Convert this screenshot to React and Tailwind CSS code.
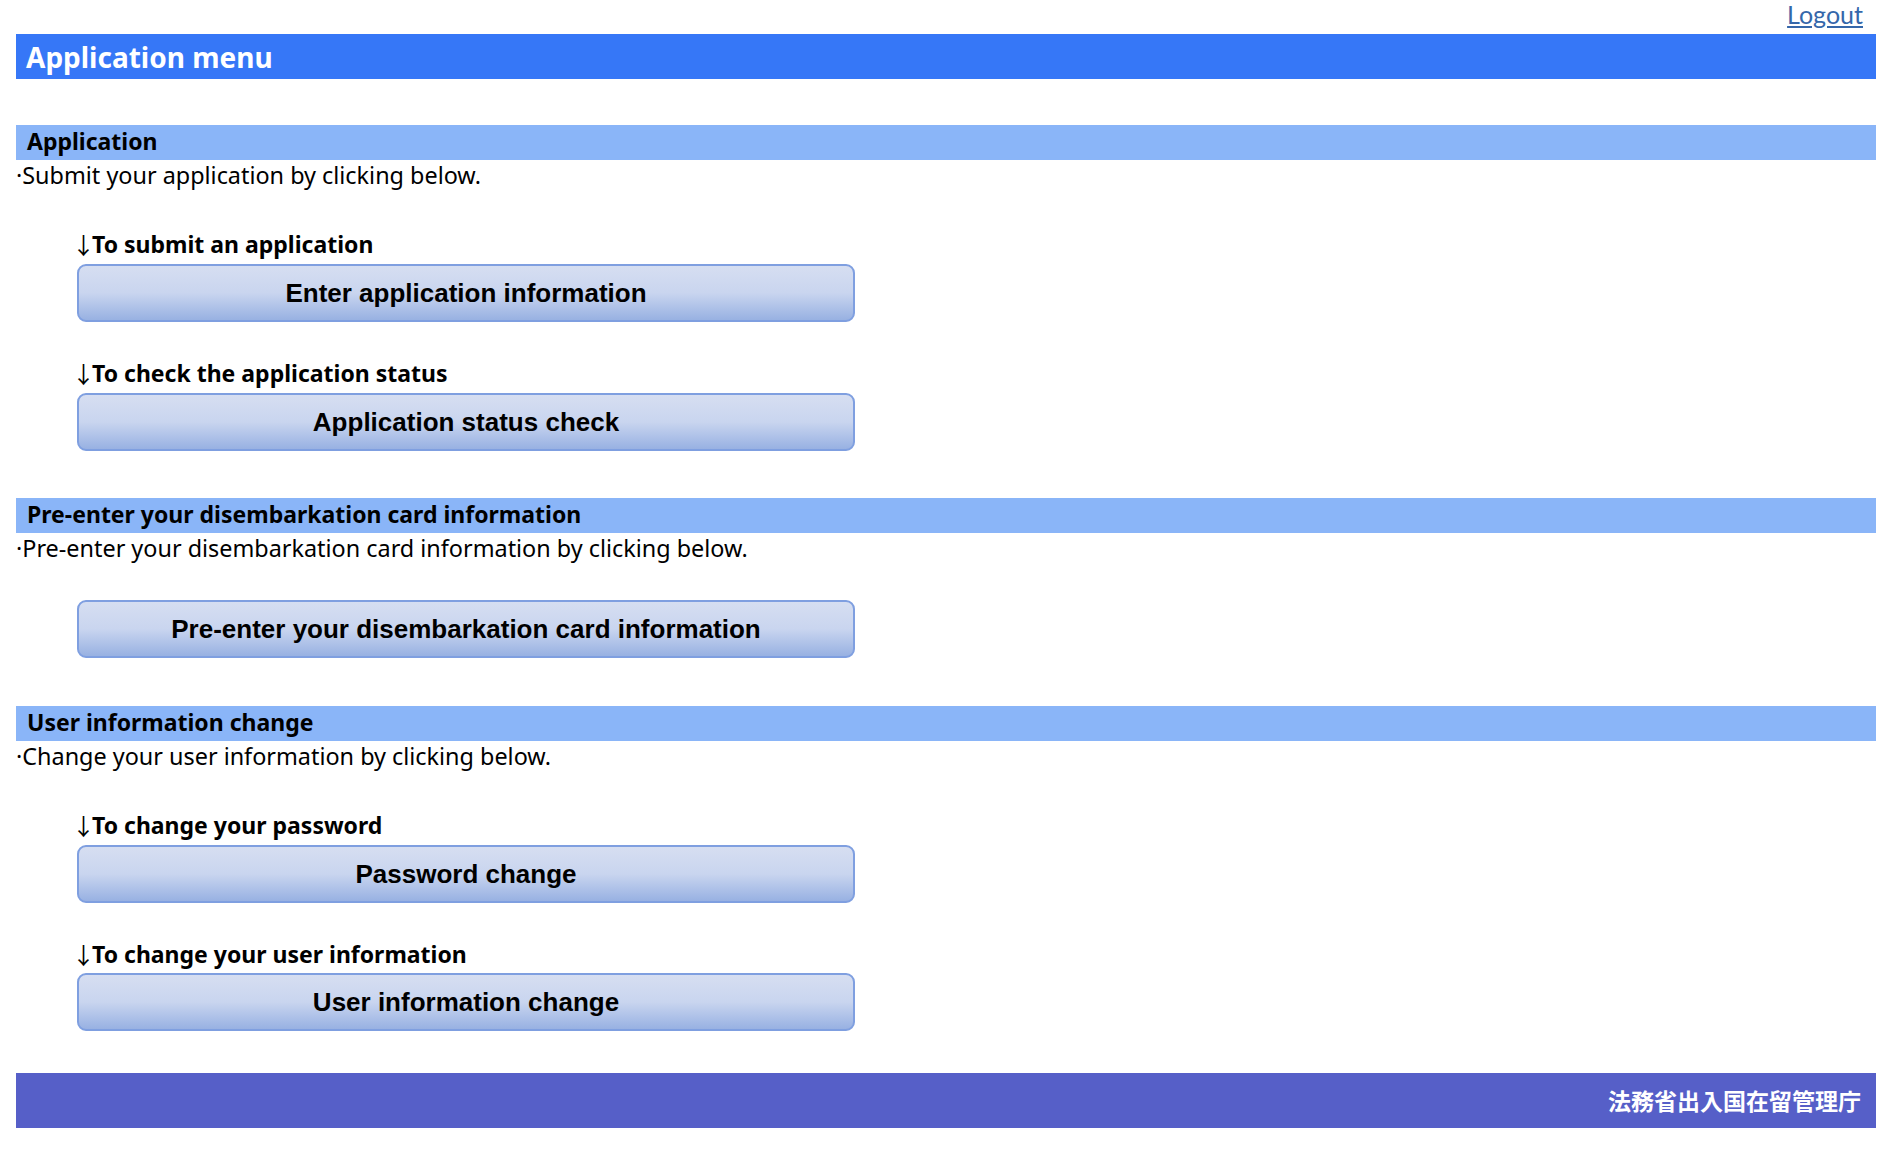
import React from "react";

const KR = { fontFamily: '"Noto Sans", "Noto Sans CJK KR", sans-serif' };

function Label({ children }) {
  return (
    <div className="h-[26px] flex items-end text-[23px] leading-[26px] font-bold text-black whitespace-nowrap" style={KR}>
      <span
        className="font-normal text-[23px] leading-[26px] ml-[-5px] mr-[-3px]"
        style={{ fontFamily: '"Noto Sans CJK KR", sans-serif' }}
      >
        ↓
      </span>
      <span>{children}</span>
    </div>
  );
}

function MenuButton({ children }) {
  return (
    <button
      type="button"
      className="w-[778px] h-[58px] rounded-[9px] border-2 border-[#7f9fe0] bg-gradient-to-b from-[#d6def1] via-[#c9d5ef] to-[#98b1e2] text-[26px] font-bold text-black flex items-center justify-center"
      style={{ fontFamily: '"Liberation Sans", Arial, sans-serif' }}
    >
      {children}
    </button>
  );
}

function SectionBar({ children }) {
  return (
    <div
      className="h-[35px] bg-[#8ab5f8] px-[11px] pb-[3px] flex items-center text-[23px] font-bold text-black"
      style={KR}
    >
      {children}
    </div>
  );
}

function Desc({ children }) {
  return (
    <div className="h-[30px] text-[23.4px] leading-[30px] text-black whitespace-nowrap" style={KR}>
      ·{children}
    </div>
  );
}

export default function App() {
  return (
    <div className="w-full bg-white min-h-[1152px]">
      <div className="ml-[16px] mr-[6px]">
        <div className="h-[34px] flex justify-end items-start pr-[13px]">
          <a
            href="#"
            className="text-[25px] leading-[28px] text-[#3567aa] underline"
            style={{ fontFamily: 'Lato, "Open Sans", sans-serif' }}
          >
            Logout
          </a>
        </div>
        <div
          className="h-[45px] bg-[#3677f7] px-[10px] flex items-center text-white text-[28px] font-bold"
          style={KR}
        >
          Application menu
        </div>

        <div className="mt-[46px]">
          <SectionBar>Application</SectionBar>
          <Desc>Submit your application by clicking below.</Desc>
          <div className="pl-[61px] mt-[41px] flex flex-col">
            <Label>To submit an application</Label>
            <div className="mt-[7px]">
              <MenuButton>Enter application information</MenuButton>
            </div>
            <div className="mt-[38px]">
              <Label>To check the application status</Label>
            </div>
            <div className="mt-[7px]">
              <MenuButton>Application status check</MenuButton>
            </div>
          </div>
        </div>

        <div className="mt-[47px]">
          <SectionBar>Pre-enter your disembarkation card information</SectionBar>
          <Desc>Pre-enter your disembarkation card information by clicking below.</Desc>
          <div className="pl-[61px] mt-[37px]">
            <MenuButton>Pre-enter your disembarkation card information</MenuButton>
          </div>
        </div>

        <div className="mt-[48px]">
          <SectionBar>User information change</SectionBar>
          <Desc>Change your user information by clicking below.</Desc>
          <div className="pl-[61px] mt-[41px] flex flex-col">
            <Label>To change your password</Label>
            <div className="mt-[7px]">
              <MenuButton>Password change</MenuButton>
            </div>
            <div className="mt-[38px]">
              <Label>To change your user information</Label>
            </div>
            <div className="mt-[6px]">
              <MenuButton>User information change</MenuButton>
            </div>
          </div>
        </div>

        <div
          className="mt-[42px] h-[55px] bg-[#565fc8] flex items-center justify-end pr-[15px] text-white text-[23px] font-bold"
          style={{ fontFamily: '"Noto Sans CJK JP", "Noto Sans", sans-serif' }}
        >
          法務省出入国在留管理庁
        </div>
      </div>
    </div>
  );
}
